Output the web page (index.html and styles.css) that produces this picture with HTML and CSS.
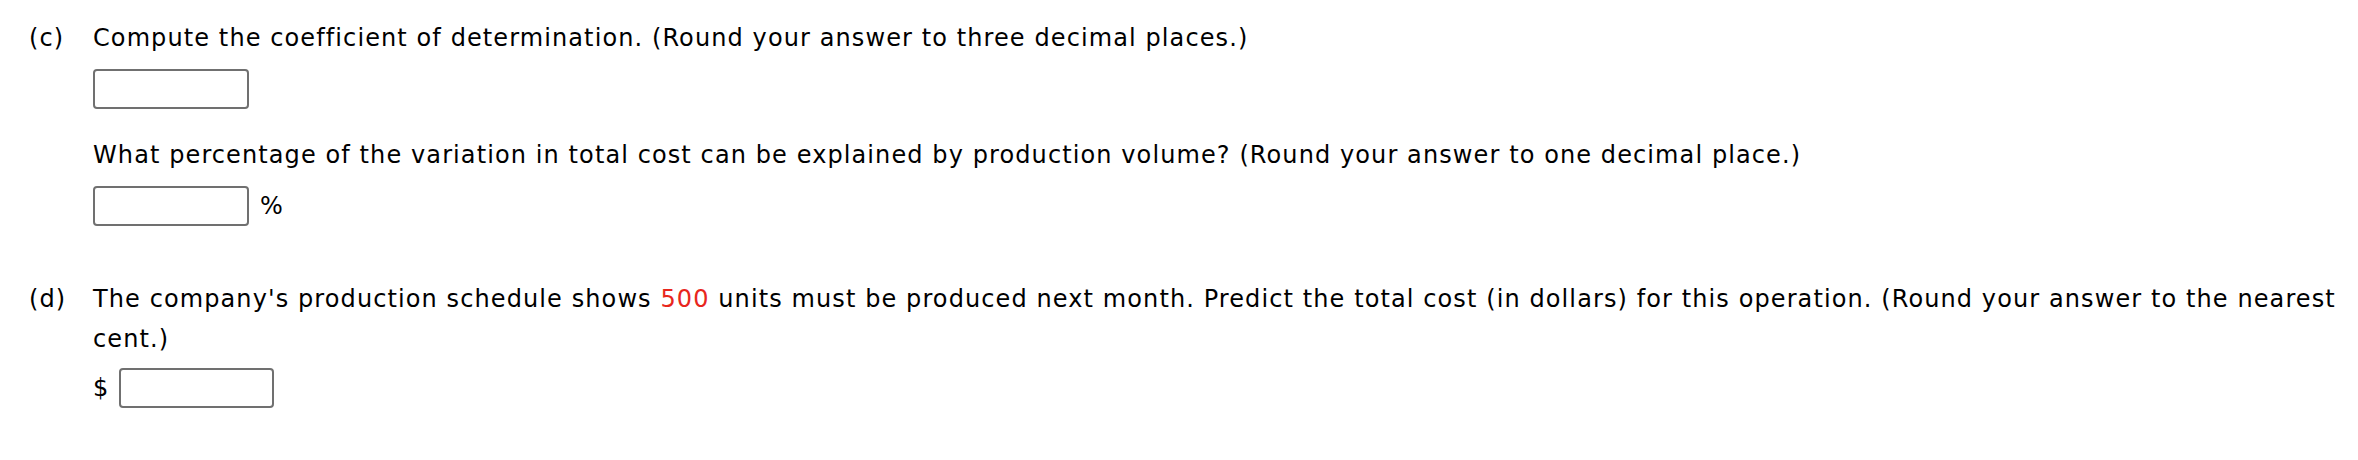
FILE: index.html
```html
<!DOCTYPE html>
<html>
<head>
<meta charset="utf-8">
<link rel="stylesheet" href="styles.css">
</head>
<body>
<div class="page">
  <div class="part part-c">
    <div class="label">(c)</div>
    <div class="content">
      <p class="line">Compute the coefficient of determination. (Round your answer to three decimal places.)</p>
      <div class="answer"><span class="box"></span></div>
      <p class="line q2">What percentage of the variation in total cost can be explained by production volume? (Round your answer to one decimal place.)</p>
      <div class="answer"><span class="box"></span><span class="unit after">%</span></div>
    </div>
  </div>
  <div class="part part-d">
    <div class="label">(d)</div>
    <div class="content">
      <p class="line">The company's production schedule shows <span class="red">500</span> units must be produced next month. Predict the total cost (in dollars) for this operation. (Round your answer to the nearest cent.)</p>
      <div class="answer answer-d"><span class="unit before">$</span><span class="box box-d"></span></div>
    </div>
  </div>
</div>
</body>
</html>
```
FILE: styles.css
```css
html, body {
  margin: 0;
  padding: 0;
  background: #ffffff;
}
body {
  font-family: "DejaVu Sans", Verdana, sans-serif;
  font-size: 24px;
  line-height: 40px;
  letter-spacing: 1.1px;
  color: #000000;
}
.page {
  padding-top: 18px;
  padding-left: 29px;
  padding-right: 10px;
}
.part {
  display: flex;
}
.label {
  width: 64px;
  flex: none;
}
.content {
  flex: 1;
}
.line {
  margin: 0;
}
.answer {
  display: flex;
  align-items: center;
  gap: 11px;
  margin-top: 11px;
}
.answer-d {
  margin-top: 9px;
  gap: 10px;
}
.box {
  display: block;
  width: 156px;
  height: 40px;
  box-sizing: border-box;
  border: 2px solid #707070;
  border-radius: 4px;
  background: #fff;
}
.box-d {
  width: 155px;
}
.q2 {
  margin-top: 26px;
}
.part-d {
  margin-top: 53px;
}
.red {
  color: #e8261d;
}
```
